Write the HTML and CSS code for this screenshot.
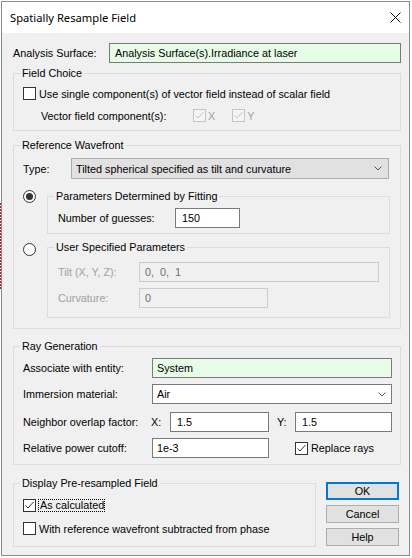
FILE: index.html
```html
<!DOCTYPE html>
<html>
<head>
<meta charset="utf-8">
<link rel="stylesheet" href="styles.css">
</head>
<body>
<div class="edge-left"><div class="dots"></div></div>
<div class="window">
  <div class="titlebar">
    <span class="title">Spatially Resample Field</span>
    <svg class="close" width="11" height="11" viewBox="0 0 11 11"><path d="M0.5 0.5L10.5 10.5M10.5 0.5L0.5 10.5" stroke="#111" stroke-width="1"/></svg>
  </div>
  <div class="content">
    <div class="row surface-row">
      <span class="lbl w-surface">Analysis Surface:</span>
      <div class="tb green tb-surface">Analysis Surface(s).Irradiance at laser</div>
    </div>

    <fieldset class="group outer field-choice">
      <legend>Field Choice</legend>
      <div class="row cb-row fc-r1">
        <span class="cb"></span><span class="cb-text">Use single component(s) of vector field instead of scalar field</span>
      </div>
      <div class="row cb-row fc-r2">
        <span class="lbl w-vec">Vector field component(s):</span>
        <span class="cb disabled"><svg width="11" height="11" viewBox="0 0 11 11"><path d="M1.5 5.5L4 8L9.5 2" fill="none" stroke="#c4c4c4" stroke-width="1"/></svg></span>
        <span class="dis-text">X</span>
        <span class="cb disabled ml-y"><svg width="11" height="11" viewBox="0 0 11 11"><path d="M1.5 5.5L4 8L9.5 2" fill="none" stroke="#c4c4c4" stroke-width="1"/></svg></span>
        <span class="dis-text">Y</span>
      </div>
    </fieldset>

    <fieldset class="group outer ref-wave">
      <legend>Reference Wavefront</legend>
      <div class="row type-row">
        <span class="lbl w-type">Type:</span>
        <div class="combo list w-typebox">
          <span>Tilted spherical specified as tilt and curvature</span>
          <svg class="chev" width="8" height="5" viewBox="0 0 8 5"><path d="M0.5 0.5L4 4L7.5 0.5" fill="none" stroke="#555" stroke-width="1"/></svg>
        </div>
      </div>
      <div class="radio-sec rs1">
        <span class="radio on"><span class="dot"></span></span>
        <fieldset class="group inner">
          <legend>Parameters Determined by Fitting</legend>
          <div class="row guess-row">
            <span class="lbl w-guess">Number of guesses:</span>
            <div class="tb w-guessbox">150</div>
          </div>
        </fieldset>
      </div>
      <div class="radio-sec rs2">
        <span class="radio"></span>
        <fieldset class="group inner inner2">
          <legend>User Specified Parameters</legend>
          <div class="row tilt-row">
            <span class="lbl dis-text w-tilt">Tilt (X, Y, Z):</span>
            <div class="tb off w-tiltbox">0,&nbsp; 0,&nbsp; 1</div>
          </div>
          <div class="row curv-row">
            <span class="lbl dis-text w-tilt">Curvature:</span>
            <div class="tb off w-curvbox">0</div>
          </div>
        </fieldset>
      </div>
    </fieldset>

    <fieldset class="group outer ray-gen">
      <legend>Ray Generation</legend>
      <div class="row assoc-row">
        <span class="lbl w-ray">Associate with entity:</span>
        <div class="tb green w-raybox">System</div>
      </div>
      <div class="row imm-row">
        <span class="lbl w-ray">Immersion material:</span>
        <div class="combo edit w-raybox">
          <span>Air</span>
          <svg class="chev chev-imm" width="8" height="5" viewBox="0 0 8 5"><path d="M0.5 0.5L4 4L7.5 0.5" fill="none" stroke="#555" stroke-width="1"/></svg>
        </div>
      </div>
      <div class="row nb-row">
        <span class="lbl w-nb">Neighbor overlap factor:</span>
        <span class="lbl w-x">X:</span>
        <div class="tb w-xbox pad-num">1.5</div>
        <span class="lbl w-y">Y:</span>
        <div class="tb w-ybox pad-num">1.5</div>
      </div>
      <div class="row rel-row">
        <span class="lbl w-ray">Relative power cutoff:</span>
        <div class="tb w-relbox">1e-3</div>
        <span class="cb replace"><svg width="11" height="11" viewBox="0 0 11 11"><path d="M1.5 5.5L4 8L9.5 2" fill="none" stroke="#333" stroke-width="1"/></svg></span>
        <span class="cb-text">Replace rays</span>
      </div>
    </fieldset>

    <div class="bottom">
      <fieldset class="group outer display">
        <legend>Display Pre-resampled Field</legend>
        <div class="row cb-row d-r1">
          <span class="cb"><svg width="11" height="11" viewBox="0 0 11 11"><path d="M1.5 5.5L4 8L9.5 2" fill="none" stroke="#333" stroke-width="1"/></svg></span>
          <span class="focus">As calculated</span>
        </div>
        <div class="row cb-row d-r2">
          <span class="cb"></span><span class="cb-text">With reference wavefront subtracted from phase</span>
        </div>
      </fieldset>
      <div class="buttons">
        <div class="btn default">OK</div>
        <div class="btn">Cancel</div>
        <div class="btn">Help</div>
      </div>
    </div>
  </div>
</div>
</body>
</html>
```

FILE: styles.css
```css
html, body { margin: 0; padding: 0; }
body {
  background: #fff;
  font-family: "Liberation Sans", Arial, sans-serif;
  font-size: 10.8px;
  color: #000;
  display: flex;
  align-items: flex-start;
  height: 558px;
  overflow: hidden;
}
.edge-left { width: 1px; flex: none; }
.edge-left .dots {
  margin-top: 203px;
  height: 86px;
  width: 1px;
  background: repeating-linear-gradient(to bottom, #e01010 0, #e01010 2px, #fff 2px, #fff 3px);
}
.window {
  flex: none;
  margin-top: 1px;
  width: 407px;
  height: 553px;
  border: 1px solid #8a8a8a;
  background: #f0f0f0;
  display: flex;
  flex-direction: column;
}
.titlebar {
  height: 31px;
  background: #fff;
  display: flex;
  align-items: center;
  padding-left: 8px;
  padding-right: 8px;
  flex: none;
}
.title {
  font-family: "Noto Sans", "Open Sans", sans-serif;
  font-size: 11.2px;
  color: #000;
}
.close { margin-left: auto; margin-top: 0; }
.content { padding: 10px 8px 0 11px; }

.row { display: flex; align-items: center; }
.lbl { flex: none; white-space: nowrap; }
.surface-row { height: 20px; }
.w-surface { width: 96px; }
.tb {
  box-sizing: border-box;
  height: 20px;
  border: 1px solid #7a7a7a;
  background: #fff;
  padding-left: 4px;
  display: flex;
  align-items: center;
  white-space: nowrap;
  flex: none;
}
.tb.green { background: #e6fce6; }
.tb.off { background: #f0f0f0; border-color: #cccccc; color: #6d6d6d; padding-left: 5px; }
.tb-surface { width: 292px; padding-left: 5px; }

.group { margin: 0; border: 1px solid #dcdcdc; min-width: 0; box-sizing: border-box; }
.group legend { font-size: 10.8px; line-height: 13px; padding: 0 2px; }
.outer { width: 388px; padding: 0 0 0 9px; }
.outer legend { margin-left: -3px; }

.field-choice { margin-top: 4px; padding-bottom: 8px; }
.cb-row { height: 13px; }
.fc-r1 { margin-top: 7px; }
.fc-r2 { margin-top: 9px; padding-left: 18px; }
.cb {
  flex: none;
  box-sizing: border-box;
  width: 13px;
  height: 13px;
  border: 1px solid #333;
  background: #fff;
  display: flex;
}
.cb svg { display: block; }
.cb.disabled { border-color: #c4c4c4; background: #f4f4f4; }
.cb-text { margin-left: 3px; white-space: nowrap; }
.w-vec { width: 152px; }
.dis-text { color: #a0a0a0; margin-left: 2px; }
.lbl.dis-text { margin-left: 0; }
.ml-y { margin-left: 17px; }

.ref-wave { margin-top: 8px; padding-bottom: 10px; }
.type-row { margin-top: 6px; }
.w-type { width: 48px; }
.combo {
  box-sizing: border-box;
  height: 21px;
  display: flex;
  align-items: center;
  justify-content: space-between;
  padding-left: 4px;
  flex: none;
  white-space: nowrap;
}
.combo.list { background: #e1e1e1; border: 1px solid #adadad; }
.combo.edit { background: #fff; border: 1px solid #7a7a7a; height: 20px; }
.w-typebox { width: 318px; }
.chev { margin-right: 6px; flex: none; }
.chev-imm { margin-right: 5px; }

.radio-sec { display: flex; align-items: flex-start; }
.rs1 { margin-top: 11px; }
.rs2 { margin-top: 7px; }
.radio {
  flex: none;
  box-sizing: border-box;
  width: 13px;
  height: 13px;
  border: 1px solid #333;
  border-radius: 50%;
  background: #fff;
  display: flex;
  align-items: center;
  justify-content: center;
  margin-right: 11px;
}
.rs2 .radio { margin-top: 2px; }
.radio .dot { width: 7px; height: 7px; border-radius: 50%; background: #333; }
.inner { width: 343px; padding: 0 0 5px 10px; }
.inner legend { margin-left: -4px; }
.inner2 { padding-bottom: 9px; }
.guess-row { margin-top: 5px; }
.w-guess { width: 117px; }
.w-guessbox { width: 65px; padding-left: 6px; }
.tilt-row { margin-top: 8px; }
.curv-row { margin-top: 6px; }
.w-tilt { width: 81px; }
.w-tiltbox { width: 240px; }
.w-curvbox { width: 129px; }

.ray-gen { margin-top: 11px; padding-bottom: 6px; }
.assoc-row { margin-top: 5px; }
.imm-row { margin-top: 6px; }
.nb-row { margin-top: 8px; }
.rel-row { margin-top: 6px; }
.w-ray { width: 129px; }
.w-raybox { width: 240px; }
.w-nb { width: 128px; }
.w-x { width: 19px; }
.w-xbox { width: 99px; }
.w-y { width: 18px; margin-left: 8px; }
.w-ybox { width: 97px; }
.pad-num { padding-left: 6px; }
.w-relbox { width: 117px; }
.replace { margin-left: 26px; }

.bottom { display: flex; align-items: flex-start; margin-top: 12px; }
.display { width: 303px; padding-bottom: 11px; }
.d-r1 { margin-top: 9px; }
.d-r2 { margin-top: 10px; }
.focus {
  margin-left: 2px;
  border: 1px dotted #000;
  padding: 0 0 0 1px;
  line-height: 11px;
  white-space: nowrap;
}
.buttons { margin-left: 10px; margin-top: 5px; display: flex; flex-direction: column; gap: 5px; }
.btn {
  box-sizing: border-box;
  width: 73px;
  height: 18px;
  background: #e1e1e1;
  border: 1px solid #adadad;
  display: flex;
  align-items: center;
  justify-content: center;
}
.btn.default { border: 2px solid #0078d7; }
```
